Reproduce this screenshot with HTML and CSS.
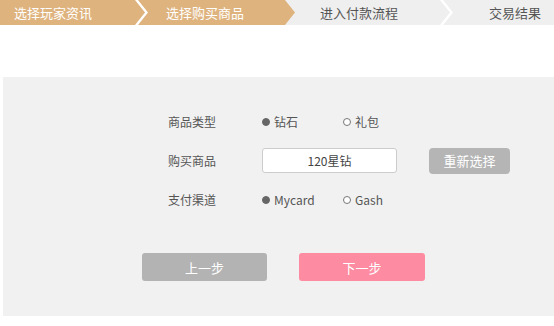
FILE: index.html
```html
<!DOCTYPE html>
<html lang="zh-CN">
<head>
    <meta charset="UTF-8">
    <meta name="viewport" content="width=device-width, initial-scale=1.0">
    <title>购买商品</title>
    <link rel="stylesheet" href="styles.css">
</head>
<body>
    <div class="steps">
        <div class="step step-1 done">选择玩家资讯</div>
        <div class="step step-2 done">选择购买商品</div>
        <div class="step step-3">进入付款流程</div>
        <div class="step step-4">交易结果</div>
    </div>

    <div class="panel">
        <div class="form">
            <span class="form-label">商品类型</span>
            <div class="options">
                <label class="radio checked"><i class="dot"></i>钻石</label>
                <label class="radio"><i class="dot"></i>礼包</label>
            </div>

            <span class="form-label">购买商品</span>
            <div class="field-row">
                <div class="text-box">120星钻</div>
                <button class="btn btn-reset">重新选择</button>
            </div>

            <span class="form-label">支付渠道</span>
            <div class="options">
                <label class="radio checked"><i class="dot"></i>Mycard</label>
                <label class="radio"><i class="dot"></i>Gash</label>
            </div>
        </div>

        <div class="actions">
            <button class="btn btn-prev">上一步</button>
            <button class="btn btn-next">下一步</button>
        </div>
    </div>
</body>
</html>
```

FILE: styles.css
```css
* {
    box-sizing: border-box;
    margin: 0;
    padding: 0;
}

body {
    font-family: "Noto Sans CJK SC", "Noto Sans", sans-serif;
    background-color: #fff;
    color: #555;
    width: 554px;
    height: 326px;
    overflow: hidden;
}

/* step bar */
.steps {
    display: flex;
    height: 25px;
    background-color: #fff;
}

.step {
    height: 25px;
    display: flex;
    align-items: center;
    font-size: 13px;
    color: #555;
    background-color: #efefef;
    white-space: nowrap;
}

.step.done {
    background-color: #deb37e;
    color: #fff;
}

.step-1 {
    width: 145px;
    padding-left: 14px;
    position: relative;
    z-index: 2;
    clip-path: polygon(0 0, calc(100% - 10px) 0, 100% 50%, calc(100% - 10px) 100%, 0 100%);
}

.step-2 {
    width: 157px;
    margin-left: -7px;
    padding-left: 28px;
    position: relative;
    z-index: 1;
    clip-path: polygon(0 0, calc(100% - 10px) 0, 100% 50%, calc(100% - 10px) 100%, 0 100%, 10px 50%);
}

.step-3 {
    width: 165px;
    margin-left: -10px;
    padding-left: 35px;
    clip-path: polygon(0 0, calc(100% - 10px) 0, 100% 50%, calc(100% - 10px) 100%, 0 100%);
}

.step-4 {
    flex: 1;
    margin-left: -7px;
    padding-left: 46px;
    clip-path: polygon(0 0, 100% 0, 100% 100%, 0 100%, 10px 50%);
}

/* panel */
.panel {
    margin: 52px 0 0 3px;
    height: 239px;
    background-color: #f1f1f1;
    padding: 32px 0 0 165px;
}

.form {
    display: grid;
    grid-template-columns: 94px auto;
    grid-auto-rows: 25px;
    row-gap: 14px;
    align-items: center;
    font-size: 12px;
}

.form-label {
    color: #555;
}

.options {
    display: flex;
}

.radio {
    display: flex;
    align-items: center;
    width: 81px;
    color: #555;
}

.dot {
    width: 8px;
    height: 8px;
    border-radius: 50%;
    border: 1px solid #777;
    background-color: #fff;
    margin-right: 4px;
}

.radio.checked .dot {
    background-color: #666;
    border-color: #666;
}

.field-row {
    display: flex;
    align-items: center;
    gap: 32px;
}

.text-box {
    width: 135px;
    height: 25px;
    line-height: 23px;
    background-color: #fff;
    border: 1px solid #ccc;
    border-radius: 3px;
    text-align: center;
    color: #444;
}

.btn {
    border: none;
    color: #fff;
    font-family: inherit;
    cursor: pointer;
    font-size: 13px;
}

.btn-reset {
    width: 81px;
    height: 26px;
    border-radius: 4px;
    background-color: #b5b5b5;
}

.actions {
    display: flex;
    gap: 32px;
    margin: 41px 0 0 -26px;
}

.btn-prev,
.btn-next {
    width: 125px;
    height: 28px;
    border-radius: 3px;
}

.btn-prev {
    background-color: #b3b3b3;
}

.btn-next {
    width: 126px;
    background-color: #fd8ba1;
}
```
